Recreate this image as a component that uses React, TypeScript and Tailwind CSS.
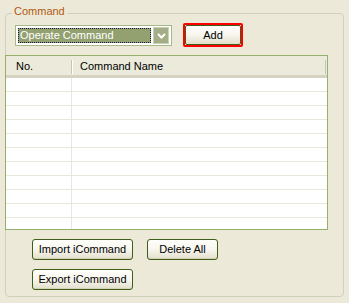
import React from "react";

const font = { fontFamily: '"Liberation Sans", Arial, sans-serif' };

function XpButton({ label, w }: { label: string; w: string }) {
  return (
    <div
      className={`${w} h-[21px] rounded-[3px] border border-[#3f5e1a] bg-gradient-to-b from-[#fefefb] via-[#f7f6ee] to-[#e3dfcc] flex items-center justify-center text-[11px] text-black shadow-[inset_0_-1px_0_#d6d0b8]`}
    >
      {label}
    </div>
  );
}

export default function App() {
  const rows = Array.from({ length: 11 });
  return (
    <div
      className="w-[349px] h-[303px] bg-[#ECE9D8] pt-[13px] pl-[5px] overflow-hidden"
      style={font}
    >
      <div className="relative w-[339px] h-[284px] border border-[#D0D0BF] rounded-[4px]">
        <div className="absolute left-[6px] -top-[9px] px-[2px] bg-[#ECE9D8] text-[11px] leading-[13px] text-[#b05a10]">
          Command
        </div>
        {/* combo row */}
        <div className="flex items-start pl-[9px] pt-[9px]">
          <div className="mt-[2px] w-[157px] h-[21px] border border-[#a6b98a] bg-white flex items-center p-[2px]">
            <div className="flex-1 h-full bg-[#93A070] border border-dotted border-[#1a1a40] flex items-center pl-[1px] text-[11px] text-white">
              Operate Command
            </div>
            <div className="ml-[2px] w-[16px] h-[17px] bg-[#a3ae86] border border-[#c9d1b4] flex items-center justify-center">
              <svg width="9" height="6" viewBox="0 0 9 6">
                <path d="M1 1 L4.5 4.5 L8 1" stroke="white" strokeWidth="2" fill="none" />
              </svg>
            </div>
          </div>
          <div className="ml-[11px] w-[60px] h-[24px] border-2 border-[#ff0000] rounded-[2px]">
            <div className="w-full h-full rounded-[2px] border border-[#3f5e1a] bg-gradient-to-b from-[#fefefb] via-[#f7f6ee] to-[#e3dfcc] flex items-center justify-center text-[11px] text-black">
              Add
            </div>
          </div>
        </div>
        {/* list view */}
        <div className="-ml-[1px] mt-[8px] w-[323px] h-[175px] border border-[#94b06a] bg-white overflow-hidden">
          <div className="h-[22px] bg-[#EBEADB] flex relative border-b-[3px] border-[#d6d2c2]">
            <div className="w-[65px] flex items-center pl-[10px] pt-[1px] text-[11px] text-black">No.</div>
            <div className="w-[1px] mt-[4px] h-[14px] bg-[#c7c5b2]" />
            <div className="w-[1px] mt-[4px] h-[14px] bg-white" />
            <div className="w-[252px] flex items-center pl-[7px] pt-[1px] text-[11px] text-black">Command Name</div>
            <div className="w-[1px] mt-[4px] h-[14px] bg-[#c7c5b2]" />
          </div>
          <div className="relative">
            {rows.map((_, i) => (
              <div key={i} className="h-[14px] flex border-b border-[#e8e7da]">
                <div className="w-[66px] border-r border-[#e8e7da]" />
                <div className="flex-1" />
              </div>
            ))}
          </div>
        </div>
        {/* buttons */}
        <div className="pl-[26px] mt-[9px] flex flex-col gap-[9px]">
          <div className="flex gap-[14px]">
            <XpButton label="Import iCommand" w="w-[101px]" />
            <XpButton label="Delete All" w="w-[71px]" />
          </div>
          <div className="flex">
            <XpButton label="Export iCommand" w="w-[101px]" />
          </div>
        </div>
      </div>
    </div>
  );
}
